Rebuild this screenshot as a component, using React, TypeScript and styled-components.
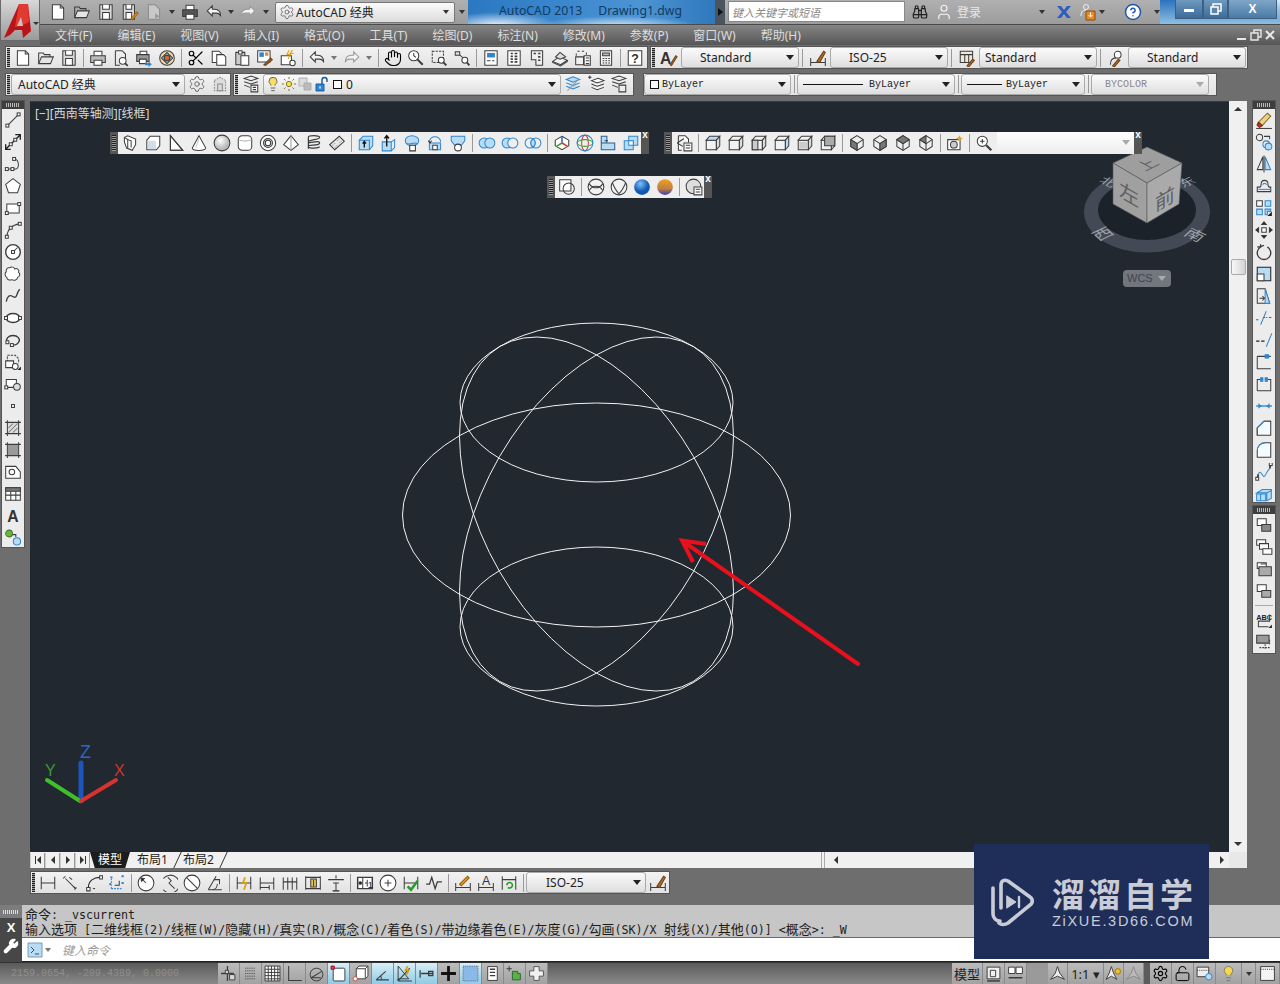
import React from 'react';
import styled, { createGlobalStyle } from 'styled-components';
import { Binoculars, CircleHelp, Hand, Lightbulb, LockOpen, Scissors, Settings, Sun, User, Wrench } from 'lucide-react';

const GlobalStyle = createGlobalStyle`
  html, body { margin: 0; padding: 0; background: #6e6e6e; }
  * { box-sizing: border-box; }
`;

const CJK = `"Noto Sans", "Noto Sans CJK SC", sans-serif`;
const MONO = `"Liberation Mono", "Noto Sans CJK SC", monospace`;

const BLUE = '#2f86cf';
const SKY = '#b7dcf4';

const Sq: React.FC<{ x: number; y: number }> = ({ x, y }) => (
  <rect x={x - 1.3} y={y - 1.3} width="2.6" height="2.6" fill="#fff" strokeWidth="0.9" />
);

const Cube: React.FC<{ face?: string }> = ({ face }) => (
  <>
    <path d="M2 5.5h9v8.5H2z" fill={face === 'front' ? SKY : '#f2f2f2'} />
    <path d="M2 5.5L5 2h9l-3 3.5z" fill={face === 'top' ? SKY : '#f2f2f2'} />
    <path d="M11 5.5L14 2v8.5L11 14z" fill={face === 'right' ? SKY : '#dcdcdc'} />
  </>
);

const Iso: React.FC<{ side: string }> = ({ side }) => (
  <>
    <path d="M8 1.5l5.5 3.5v6L8 14.5 2.5 11V5z" fill="#eee" />
    <path d="M2.5 5L8 8.5 13.5 5M8 8.5v6" />
    <path d={side === 'l' ? 'M2.5 5L8 8.5v6L2.5 11z' : side === 'r' ? 'M13.5 5L8 8.5v6l5.5-3.5z' : side === 't' ? 'M8 1.5l5.5 3.5L8 8.5 2.5 5z' : 'M8 1.5L2.5 5 8 8.5l0-7z'} fill="#777" />
  </>
);

const Dim: React.FC<{ children?: React.ReactNode }> = ({ children }) => (
  <>
    <path d="M2 2.5v11M14 2.5v11M2 8h12" />
    {children}
  </>
);

const Ord: React.FC<{ a: string; b: string }> = ({ a, b }) => (
  <>
    <path d="M2 2.5h8v6H2z" fill={a} />
    <path d="M6 7.5h8v6H6z" fill={b} />
  </>
);

const ICONS: Record<string, React.ReactNode> = {
  new: <><path d="M3 1.5h7l3 3v10H3z" fill="#fff" /><path d="M10 1.5v3h3" /></>,
  open: <><path d="M1.5 13V3.5h4l1 1.5h5v2" /><path d="M1.5 13l2.5-6h10.5l-2.5 6z" fill="#e4e4e4" /></>,
  save: <><path d="M2.5 1.5h11v13h-11z" fill="#d8d8d8" /><path d="M5 1.5v4h6v-4M5 8.5h6v6H5z" fill="#fff" /></>,
  saveas: <><path d="M2 1.5h10v13H2z" fill="#d8d8d8" /><path d="M4.5 1.5v4h5v-4M4.5 8.5h5v6h-5z" fill="#fff" /><path d="M9 14l5-6 1.2 1-5 6z" fill="#e8a020" stroke="#a06000" /></>,
  plotdoc: <><path d="M3 1.5h6l4 4v9H3z" fill="#c8c8c8" stroke="#8a8a8a" /><path d="M9 9l4 3-4 2z" fill="#9a9a9a" stroke="none" /></>,
  print: <><path d="M4.5 6V2h7v4" fill="#fff" /><path d="M1.5 6h13v6h-13z" fill="#bbb" /><path d="M4.5 10h7v4.5h-7z" fill="#fff" /></>,
  printw: <><path d="M4.5 6V2h7v4" fill="#fff" /><path d="M1.5 6h13v6h-13z" fill="#555" /><path d="M4.5 10h7v4.5h-7z" fill="#fff" /></>,
  undo: <><path d="M6.5 2.5L2 7l4.5 4.5V9H10c2 0 3.5 1 4 3 0-4-2-6.5-5.5-6.5h-2z" fill="#f4f4f4" /></>,
  redo: <><path d="M9.5 2.5L14 7l-4.5 4.5V9H6c-2 0-3.5 1-4 3 0-4 2-6.5 5.5-6.5h2z" fill="#f4f4f4" stroke="#9a9a9a" /></>,
  preview: <><path d="M3 1.5h6l3 3v5M7 14.5H3v-13" /><circle cx="9.5" cy="10.5" r="3" fill="#fff" /><path d="M11.5 12.5l2.5 2.5" strokeWidth="1.6" /></>,
  publish: <><path d="M4.5 5V2h6v3" fill="#fff" /><path d="M1.5 5h11v6h-11z" fill="#999" /><path d="M4 9h6v4H4z" fill="#fff" /><path d="M9 12.5h3V11l3 2.5-3 2.5v-1.5H9z" fill={BLUE} stroke="none" /></>,
  viz: <><circle cx="8" cy="8" r="6.5" fill="#f0d8a0" /><path d="M3 8l5-5 5 5-5 5z" fill="#7cb6e0" /><circle cx="8" cy="8" r="2.5" fill="#e06030" /></>,
  cut: <Scissors x="0" y="0" width="16" height="16" strokeWidth="1.6" />,
  copy: <><path d="M2 2h6l2 2v8H2z" fill="#fff" /><path d="M6 5h6l2 2v7.5H6z" fill="#fff" /></>,
  paste: <><path d="M2.5 3h8v11h-8z" fill="#ccc" /><path d="M5 1.5h3v3H5z" fill="#fff" /><path d="M7 6h7v8.5H7z" fill="#fff" /></>,
  match: <><path d="M1.5 1.5h11v10h-11z" fill="#fff" /><path d="M3 3h4v4H3z" fill={BLUE} stroke="none" /><path d="M8 3h3v3H8z" fill="#d84" stroke="none" /><path d="M7 14l6-6 1.5 1.5-6 5z" fill="#a06030" stroke="#704010" /></>,
  block: <><path d="M2 6h9v8H2z" fill="#fff" /><circle cx="12" cy="12.5" r="2.4" fill="#fff" /><path d="M9 1l-2 4h3l-2 4M12 1l-2 3h3" stroke="#e0a000" /></>,
  pan: <Hand x="0" y="0" width="16" height="16" strokeWidth="1.5" />,
  zrt: <><circle cx="6" cy="6" r="4.5" fill="#fff" /><path d="M6 3.5V6l2 1.5" /><path d="M9 9l5 5" strokeWidth="1.8" /></>,
  zwin: <><path d="M2 2h10v10H2z" strokeDasharray="2 1" /><circle cx="10" cy="10" r="2.6" fill="#fff" /><path d="M12 12l2.5 2.5" strokeWidth="1.7" /></>,
  zprev: <><path d="M2 2.5h4v3H2z" fill="#ddd" /><path d="M6 5.5l2.5 2" /><circle cx="10.5" cy="10" r="2.6" fill="#fff" /><path d="M12.5 12l2 2.5" strokeWidth="1.7" /></>,
  props: <><path d="M2.5 1.5h11v13h-11z" fill="#fff" /><path d="M4.5 3.5h7v4h-7z" fill={BLUE} stroke="none" /><path d="M4.5 10.5h3M9 10.5h2" /></>,
  dc: <><path d="M2.5 1.5h11v13h-11z" fill="#fff" /><path d="M5 4h2M8.5 4h2.5M5 6.5h2M8.5 6.5h2.5M5 9h2M8.5 9h2.5M5 11.5h2M8.5 11.5h2.5" strokeWidth="1.5" /></>,
  tp: <><path d="M3 1.5h10v13H7v-5H3z" fill="#eee" /><path d="M5 4h2M9 4h2M9 7h2M9 10h2" strokeWidth="1.5" /></>,
  sheet: <><path d="M1.5 11l6-4 7 3-6 4z" fill="#f0f0f0" /><path d="M4 7l4-4 5 4-5 2z" fill="#ddd" /><path d="M1.5 11v1l7 3 6-4v-1" /></>,
  markup: <><path d="M3 2h2M7 2h2M2 4v2M11 3v2" /><path d="M1.5 7h7v7h-7z" fill="#f0f0f0" /><path d="M9 6h5.5v8.5H9z" fill="#fff" /><path d="M10.5 8h3M10.5 10.5h3M10.5 13h3" /></>,
  calc: <><path d="M3 1.5h10v13H3z" fill="#f4f4f4" /><path d="M5 3.5h6v2.5H5z" fill="#bbb" /><path d="M5 8.5h1.5M7.5 8.5H9M10 8.5h1.5M5 10.5h1.5M7.5 10.5H9M10 10.5h1.5M5 12.5h1.5M7.5 12.5H9M10 12.5h1.5" /></>,
  help: <><path d="M2 1.5h12v13H2z" fill="#fff" /><text x="8" y="12" textAnchor="middle" fontFamily="Liberation Sans" fontWeight="700" fontSize="11" fill="#333" stroke="none">?</text></>,
  tstyle: <><text x="0" y="13" fontFamily="Liberation Sans" fontWeight="700" fontSize="14" fill="#333" stroke="none">A</text><path d="M9 14l5-8 1.2.8-5 8z" fill="#a86a30" stroke="#704010" /></>,
  dstyle: <><path d="M1.5 8v7M14.5 8v7M1.5 12h13" /><path d="M7 11l6-9 1.5 1-5 9z" fill="#a86a30" stroke="#704010" /></>,
  tbstyle: <><path d="M2 2h11v10H2zM2 5h11M6 5v7M9.5 5v7" fill="#f0e8d8" /><path d="M8 15l5-6 1.5 1-5 6z" fill="#a86a30" stroke="#704010" /></>,
  mlstyle: <><path d="M3 14c0-5 2-6 5-6" /><circle cx="9.5" cy="5" r="3" fill="#fff" /><path d="M5 15l5-6 1.5 1-5 6z" fill="#a86a30" stroke="#704010" /></>,
  wsgear: <Settings x="0" y="0" width="16" height="16" strokeWidth="1.3" stroke="#666" />,
  wssave: <><path d="M3 5l5-3 5 3v9H3z" stroke="#888" strokeDasharray="1.5 1" fill="#ddd" /><path d="M6 8h4v6H6z" stroke="#888" /></>,
  laymgr: <><path d="M2 3l6-2 6 2-6 2zM2 6l6 2 6-2M2 9l5 2" /><path d="M8 9h6v6H8z" fill="#fff" /><path d="M9.5 11h3M9.5 13h3" /></>,
  laycur: <><path d="M2 4l6-2.5L14 4 8 6.5zM2 7l6 2.5L14 7M2 10l6 2.5L14 10" stroke={BLUE} fill={SKY} /><path d="M3 14l10-10" stroke="#c86" /></>,
  laymatch: <><path d="M1 2l3 0M2.5 .5v3" /><path d="M4 5l6-2 5 2-6 2zM4 8l5 2 6-2M4 11l5 2 6-2" fill="#fff" /></>,
  layprev: <><path d="M2 3l6-2 6 2-6 2zM2 6l6 2 6-2M2 9l5 2" /><path d="M8 9h6v6H8z" fill="#eee" /></>,
  bulb: <Lightbulb x="0" y="0" width="16" height="16" strokeWidth="1.5" fill="#f8de60" stroke="#665" />,
  sun: <Sun x="0" y="0" width="16" height="16" strokeWidth="1.5" fill="#f6e060" stroke="#8a7a20" />,
  freeze: <><path d="M2 2h8v8H2z" fill="#ddd" stroke="#aaa" /><path d="M7 7h7v7H7z" fill="#bbb" stroke="#aaa" /></>,
  unlock: <><path d="M3 8h8v7H3z" fill={BLUE} stroke="#105a9a" /><path d="M9 8V4a2.5 2.5 0 0 1 5 0v2" stroke="#105a9a" strokeWidth="1.4" /><path d="M7 10.5v2" stroke="#fff" strokeWidth="1.4" /></>,
  line: <><path d="M3 13L13 3" /><Sq x={3} y={13} /><Sq x={13} y={3} /></>,
  xline: <><path d="M1.5 14.5l13-13M10 1.5h4.5V6M1.5 10v4.5H6" stroke="#222" strokeWidth="1.2" /><Sq x={6} y={10} /><Sq x={10} y={6} /></>,
  pline: <><path d="M2.5 12.5h5l3 0c3 0 3.5-8-1-9" /><Sq x={2.5} y={12.5} /><Sq x={7.5} y={12.5} /><Sq x={9} y={3.5} /></>,
  polygon: <path d="M8 1.5l6.5 5-2.5 7.5H4L1.5 6.5z" fill="#fff" />,
  rect: <><path d="M2.5 4.5h11v8h-11z" fill="#fff" /><Sq x={2.5} y={12.5} /><Sq x={13.5} y={4.5} /></>,
  arc: <><path d="M2.5 14C3 8 7 3.5 14 2.5" /><Sq x={2.5} y={14} /><Sq x={6} y={6} /><Sq x={14} y={2.5} /></>,
  circle: <><circle cx="8" cy="8" r="6.5" fill="#fff" strokeWidth="1.2" /><path d="M8 8l4-4" /><Sq x={8} y={8} /></>,
  cloud: <path d="M5 2.5c2-1.5 4-.5 4.5 1 2-1 4.5 1 3.5 3 1.5 1 1.5 4-1 4.5 0 2-3 3.5-5 2-2 1-4.5 0-4.5-2-2-1-2-4-.5-5C1.5 4 3 2 5 2.5z" fill="#fff" />,
  spline: <path d="M2 13c1-5 3-6 5-5s3 2 4 0 1-4 3-6" strokeWidth="1.2" />,
  ellipse: <><ellipse cx="8" cy="8" rx="6.2" ry="4" fill="#fff" strokeWidth="1.2" /><Sq x={1.8} y={8} /><Sq x={14.2} y={8} /></>,
  ellarc: <><path d="M3 10C1 7 4 4 8 4s7 3 5 6-6 2.5-6 2.5" strokeWidth="1.2" /><Sq x={3} y={10} /><Sq x={7} y={12.5} /></>,
  insert: <><path d="M3 8V2h7l3 3v4" strokeDasharray="2 1" /><path d="M1.5 7h7v6h-7z" fill="#fff" /><circle cx="10" cy="12" r="2.6" fill="#fff" /><path d="M12 15l3-3v3z" fill="#222" stroke="none" /></>,
  bcreate: <><path d="M2 4h9v7H2z" fill="#fff" /><circle cx="11.5" cy="10.5" r="3" fill="#ddd" /><Sq x={2} y={11} /></>,
  point: <Sq x={8} y={8} />,
  hatch: <><path d="M3 3h10v10H3zM1 3h14M1 13h14M3 1v14M13 1v14" fill="#ddd" /><path d="M4 8l4-4M4 12l8-8M8 12l4-4" stroke="#777" /></>,
  gradient: <><path d="M3 3h10v10H3zM1 3h14M1 13h14M3 1v14M13 1v14" /><path d="M3.5 3.5h9v9h-9z" fill="#777" stroke="none" opacity=".7" /></>,
  region: <><path d="M1.5 3h9l4 5v5.5h-13z" fill="#fff" /><circle cx="7" cy="8" r="2.5" fill="#fff" /></>,
  table: <><path d="M1.5 2.5h13v11h-13z" fill="#fff" /><path d="M1.5 2.5h13v3h-13z" fill="#777" /><path d="M1.5 9h13M6 5.5v8M10.5 5.5v8" /></>,
  mtext: <text x="8" y="13" textAnchor="middle" fontFamily="Liberation Sans" fontWeight="700" fontSize="14" fill="#333" stroke="none">A</text>,
  addsel: <><circle cx="4.5" cy="4" r="3" fill="#6eb53f" stroke="#3d7a20" /><path d="M7.5 5h3v2" /><circle cx="11.5" cy="11" r="3.2" fill={SKY} stroke={BLUE} /></>,
  eraser: <><path d="M3 10l8-8 3 2.5-7.5 8.5z" fill="#e9d18a" stroke="#8a6a20" /><path d="M3 10l3.5 3L4 14.5 1.8 12.5z" fill="#c83a20" stroke="#802010" /><path d="M1 15.5h14" /></>,
  cpobj: <><circle cx="4" cy="4" r="2.8" /><path d="M8 3h5v2.5" /><circle cx="10" cy="10" r="3" stroke={BLUE} /><circle cx="12" cy="12" r="3" fill={SKY} stroke={BLUE} /></>,
  mirror: <><path d="M7 1.5L2 13h5z" /><path d="M9 1.5l5 11.5H9z" fill={SKY} stroke={BLUE} /><path d="M8 .5v15" /></>,
  offset: <><path d="M2 13V9h2c1 0 1.5-1 1.5-3a3 3 0 0 1 6 0c0 2 .5 3 1.5 3h1v4z" /><path d="M3 11h11" stroke={BLUE} /><path d="M7 7a1.5 1.5 0 0 1 3 0" stroke={BLUE} /></>,
  array: <><path d="M1.5 1.5h5v5h-5z" fill="#fff" /><path d="M9 1.5h5v5H9zM1.5 9h5v5h-5z" fill={SKY} stroke={BLUE} /><path d="M9 9h5v2H11v3H9z" fill={SKY} stroke={BLUE} /><path d="M15 11v4h-4z" fill="#222" stroke="none" /></>,
  move: <><path d="M6 6h4v4H6z" fill="#fff" /><path d="M8 .8L6 3.2h4zM8 15.2l-2-2.4h4zM.8 8l2.4-2v4zM15.2 8l-2.4-2v4z" fill="#222" /></>,
  rotate: <path d="M5 3.5A6 6 0 1 0 11 3.5M5 3.5h-3M5 3.5V1M5 3.5L8 2" strokeWidth="1.2" />,
  scale: <><path d="M2 2h12v12H2z" fill={SKY} stroke="#222" /><path d="M2 8h6v6H2z" fill="#fff" /></>,
  stretch: <><path d="M2 1.5h7l4 13H2z" /><path d="M9 1.5l4 13H9z" fill={SKY} stroke={BLUE} /><path d="M4 10h4M6.5 8l2 2-2 2" fill="none" /></>,
  trim: <><path d="M1 9.5h3M7 7.5l4 0M12.5 7.5h2" stroke="#555" strokeDasharray="2 1" /><path d="M5 14L10 2" stroke={BLUE} /></>,
  extend: <><path d="M1 9h3M5.5 9h3" stroke="#222" strokeDasharray="3 1" /><path d="M10 14l5-12" stroke={BLUE} /></>,
  breakpt: <><path d="M2 3h12M2 3v11h12" /><path d="M9 1.5h3v3H9z" fill={BLUE} stroke={BLUE} /></>,
  brk: <><path d="M2 14V4h3M11 4h3v10H2" /><path d="M5 2.5h2v3H5zM9 2.5h2v3H9z" fill={BLUE} stroke={BLUE} /></>,
  join: <><path d="M1 8h14" stroke={BLUE} strokeWidth="1.2" /><path d="M3 5.5l3 2.5-3 2.5zM13 5.5L10 8l3 2.5z" fill={BLUE} stroke="none" /></>,
  chamfer: <><path d="M2 14.5V8l6-6h6" /><path d="M2 14.5V8l6-6h6v12.5z" fill="#f4fbff" /><path d="M2 8l6-6" stroke={BLUE} /></>,
  fillet: <><path d="M2 14.5V8.5a7 7 0 0 1 7-7h5v13z" fill="#f4fbff" /><path d="M2 8.5a7 7 0 0 1 7-7" stroke={BLUE} /></>,
  blend: <><path d="M2 14l1-4M13 5l1-4" strokeWidth="1.6" /><path d="M3 10c2-6 4 5 6 1s3-5 4-6" stroke={BLUE} /><Sq x={2} y={14} /><Sq x={14} y={1} /></>,
  explode: <><path d="M1.5 7l5-3h8l-1 3z" stroke={BLUE} fill={SKY} /><path d="M1.5 8h8v6h-8zM10.5 7l4-2v7l-4 2z" stroke={BLUE} fill={SKY} /><path d="M5 8v6" stroke={BLUE} /></>,
  ord1: <Ord a="#fff" b="#888" />,
  ord2: <><path d="M1.5 1.5h8v5h-8z" fill="#fff" /><path d="M4 5h8v5H4z" fill="#fff" /><path d="M7 9.5h8v5H7z" fill="#fff" /></>,
  ord3: <><path d="M2 2.5h8v5H2z" fill="#fff" /><path d="M3.5 6h11v8h-11z" fill="#aaa" /><path d="M5 3.5h5" /></>,
  ord4: <Ord a="#fff" b="#aaa" />,
  abc: <><text x="1" y="8" fontFamily="Liberation Sans" fontSize="6.5" fontWeight="700" fill="#222" stroke="none">ABC</text><path d="M13 3v6H3v5h9" /><path d="M12 15l3-3v3z" fill="#222" stroke="none" /></>,
  wipe: <><path d="M1.5 2h11v7h-11z" fill="#999" /><path d="M4 13h10M9 10v5M13 6v4" strokeDasharray="1.5 1" /></>,
  psolid: <><path d="M3 3l3-1.5 7 3v5l-3 5-5-2-2-5.5z" fill="#fff" /><path d="M3 3l3 2v8" /><path d="M6 5l3 1v6" /></>,
  box: <><path d="M2.5 5.5L5.5 2H14v8.5L11 14H2.5z" fill="#fff" /><path d="M3.5 6h7v7.5h-7z" fill="#d0dce6" stroke="none" /></>,
  wedge: <><path d="M3 1.5v13h11z" fill="#fff" /><path d="M3 1.5L14 14.5H3z" /></>,
  cone: <><path d="M8 1.5L2 12.5a6 2.2 0 0 0 12 0z" fill="#fff" /><path d="M5 12c1-2 2-5 3-8" stroke="#ccc" /></>,
  sphere: <><defs><radialGradient id="sg" cx=".4" cy=".35"><stop offset="0" stopColor="#fff" /><stop offset="1" stopColor="#bbb" /></radialGradient></defs><circle cx="8" cy="8" r="7" fill="url(#sg)" /></>,
  cyl: <><rect x="2" y="1.5" width="12" height="13" rx="3.5" fill="#fff" /><path d="M2 5c3 1.5 9 1.5 12 0" stroke="#aaa" /></>,
  torus: <><circle cx="8" cy="8" r="6.8" fill="#fff" /><circle cx="8" cy="8" r="4" fill="#ccc" /><circle cx="8" cy="8" r="2.4" fill="#fff" /></>,
  pyr: <><path d="M8 1.5L1.5 9.5 8 14.5l6.5-5z" fill="#fff" /><path d="M8 1.5v13" stroke="#999" /></>,
  helix: <path d="M3 3c0-2 10-2 10 0s-10 2-10 4 10-2 10 1-10 1-10 3 10 2 10 0M3 3v10" strokeWidth="1.1" />,
  planar: <><path d="M1.5 9.5L10 2l4.5 4.5L6 14z" fill="#e8e8e8" /><path d="M4 10l3-2.5M6 12l3-2.5M8 6l3-2.5M10 8l2-2" stroke="#999" strokeDasharray="1 1" /></>,
  extrude: <><path d="M2 5.5L5.5 2H14v8.5L11 14H2z" fill={SKY} stroke={BLUE} /><path d="M2 5.5h9V14" stroke={BLUE} /><path d="M6.5 12V7M5 8.5l1.5-2 1.5 2" stroke="#111" strokeWidth="1.2" /></>,
  presspull: <><path d="M2 7h8v8H2z" fill={SKY} stroke={BLUE} /><path d="M10 15l3-3V5l-3 2" stroke={BLUE} /><path d="M6 11V2M4 4l2-2.5L8 4" stroke="#111" strokeWidth="1.2" /></>,
  sweep: <><ellipse cx="8" cy="6" rx="6" ry="4.5" fill={SKY} stroke={BLUE} /><path d="M3 8c3 3 7-2 10 1" stroke={BLUE} /><path d="M6 10h5v5H6z" fill="#fff" stroke="#333" /></>,
  revolve: <><path d="M3 7c0-6 10-6 10 0" stroke={BLUE} /><path d="M3 8h10v6H3z" fill={SKY} stroke={BLUE} /><path d="M2 6L3.5 8 5 6" stroke="#222" /><path d="M6 10h4v4H6z" fill="#fff" /></>,
  loft: <><path d="M2 2h12v4l-3 4H5L2 6z" fill={SKY} stroke={BLUE} /><circle cx="8" cy="12" r="3" fill="#fff" /></>,
  union: <><circle cx="5.5" cy="8" r="4.5" fill={SKY} stroke={BLUE} /><circle cx="10.5" cy="8" r="4.5" fill={SKY} stroke={BLUE} /></>,
  subtract: <><circle cx="5.5" cy="8" r="4.5" fill={SKY} stroke={BLUE} /><circle cx="10.5" cy="8" r="4.5" fill="#eee" stroke={BLUE} /></>,
  inter: <><circle cx="5.5" cy="8" r="4.5" fill="#eee" stroke={BLUE} /><circle cx="10.5" cy="8" r="4.5" fill="none" stroke={BLUE} /><path d="M8 4.3a4.5 4.5 0 0 1 0 7.4 4.5 4.5 0 0 1 0-7.4z" fill={SKY} stroke={BLUE} /></>,
  g3d: <><path d="M8 2l6 3.5v5L8 14l-6-3.5v-5z" fill="#fff" /><path d="M8 8V2" stroke="#2a6fc0" strokeWidth="1.4" /><path d="M8 8l-5 3" stroke="#3a3" strokeWidth="1.4" /><path d="M8 8l5 3" stroke="#d33" strokeWidth="1.4" /></>,
  r3d: <><ellipse cx="8" cy="8" rx="3" ry="7" stroke="#d33" /><ellipse cx="8" cy="8" rx="7" ry="3" stroke="#3a3" /><circle cx="8" cy="8" r="7" stroke={BLUE} /></>,
  a3d: <><path d="M2 2h5v6H2zM2 8h12v6H2z" fill={SKY} stroke="#2a5f90" /><path d="M5 6h3" /></>,
  arr3d: <><path d="M6 2h8v8H6z" fill={SKY} stroke={BLUE} /><path d="M2 6h8v8H2z" fill={SKY} stroke={BLUE} /><path d="M6 6h4v4H6z" fill="#fff" stroke={BLUE} /></>,
  nview: <><path d="M3 1.5h6l3 3v3M6 14.5H3v-13" fill="#fff" /><path d="M2 8L8 4M2 8l5 3" /><path d="M8 8h7v7H8z" fill="#fff" /><path d="M9.5 10h4M9.5 12.5h4" /></>,
  vtop: <Cube face="top" />,
  vbot: <Cube />,
  vleft: <><Cube /><path d="M2 5.5h5v8.5H2z" fill="#ccc" /></>,
  vright: <Cube face="right" />,
  vfront: <><Cube /><path d="M3 7h7v6H3z" fill="#ccc" stroke="none" /></>,
  vback: <><Cube /><path d="M5 2h9v8.5H5z" fill="#aaa" /></>,
  sw: <Iso side="l" />,
  se: <Iso side="r" />,
  ne: <Iso side="t" />,
  nw: <Iso side="n" />,
  cam: <><path d="M1.5 5h11v9h-11z" fill="#fff" /><circle cx="7" cy="9.5" r="3" fill="#ccc" /><path d="M12 1l1 2 2 1-2 1-1 2-1-2-2-1 2-1z" fill="#e8a020" stroke="none" /></>,
  zcam: <><circle cx="6.5" cy="6.5" r="4.5" fill="#fff" /><path d="M10 10l4.5 4.5" strokeWidth="2" /><path d="M4.5 6.5h4M6.5 4.5v4" /></>,
  vs2d: <><path d="M1.5 1.5h10v10h-10z" fill="#fff" /><circle cx="9.5" cy="9.5" r="5" fill="none" /></>,
  vswire: <><circle cx="8" cy="8" r="7" fill="#f2f2f2" /><path d="M2 5c3 5 9 5 12 0M2 11c3-5 9-5 12 0" /></>,
  vshid: <><circle cx="8" cy="8" r="7" fill="#f2f2f2" /><path d="M2 4c2 5 4 8 6 10M14 4c-2 5-4 8-6 10" /></>,
  vsblue: <><defs><radialGradient id="bl" cx=".4" cy=".3"><stop offset="0" stopColor="#7fc0ff" /><stop offset="1" stopColor="#0f57b0" /></radialGradient></defs><circle cx="8" cy="8" r="7" fill="url(#bl)" stroke="none" /></>,
  vsor: <><defs><linearGradient id="or" x1="0" y1="0" x2="0" y2="1"><stop offset="0" stopColor="#f0a020" /><stop offset=".6" stopColor="#c08040" /><stop offset="1" stopColor="#3d3fb0" /></linearGradient></defs><circle cx="8" cy="8" r="7" fill="url(#or)" stroke="none" /></>,
  vsmgr: <><circle cx="7.5" cy="7.5" r="6.5" fill="#ddd" /><path d="M8 8h7v7H8z" fill="#fff" /><path d="M9.5 10h4M9.5 12.5h4" /></>,
  dimlin: <Dim />,
  dimal: <><path d="M3 2l-2 2M13 12l-2 2M3 4l9 9" /><path d="M6.5 3L9 5M10 11l2.5 2" /></>,
  dimarc: <><path d="M3 12C3 6 8 3 13 3" stroke="#222" /><path d="M1.5 12h3v3h-3zM13 1.5h2.5v3H13z" fill="#fff" /><path d="M7 13h2" /></>,
  dimord: <><path d="M3 13h10M3 13V3" stroke={BLUE} strokeDasharray="1.5 1" /><path d="M6 10h4V6" /><path d="M2 8v2M2 3h2M12 2h2M12 8h2" stroke={BLUE} strokeWidth="1.6" /></>,
  dimrad: <><circle cx="8" cy="8" r="7" fill="#fff" /><path d="M8 8L3.5 3.5" /><path d="M3.5 3.5l3 .6-2.4 2.4z" fill="#222" /></>,
  dimjog: <><path d="M3 4a8 8 0 1 1 0 10" fill="none" /><path d="M13 13L8 8l2-2-3-3" /></>,
  dimdia: <><circle cx="8" cy="8" r="7" fill="#fff" /><path d="M3 3l10 10" /></>,
  dimang: <><path d="M2 14h12M2 14L9 2" /><path d="M6 14a5 5 0 0 0 4-5" /><path d="M7 5h5v4" /></>,
  qdim: <Dim><path d="M9 3l-2 5h3l-2 6" stroke="#e0a000" strokeWidth="1.5" /></Dim>,
  dimbase: <><path d="M2 3v11M14 3v11M2 8h12M2 12h8M10 10v4" /></>,
  dimcont: <><path d="M2 3v11M6 3v11M10 3v11M14 3v11M2 7h12" /></>,
  dimsp: <><path d="M1.5 2v12M14.5 2v12M1.5 3h13M1.5 13h13" /><path d="M6 4.5h5v7H6z" fill="#e8c850" /><path d="M8.5 5v6" /></>,
  dimbrk: <><path d="M1 5h14M8 1v3M8 8v7M5.5 8h5" /><path d="M5 15h6" strokeWidth="1.3" /></>,
  tol: <><path d="M1.5 3h13v10h-13z" fill="#fff" strokeWidth="1.3" /><path d="M6 3v10" /><circle cx="3.8" cy="8" r="1.2" fill="#222" /><path d="M8 8h2M10 5v6" /><text x="10.5" y="12" fontSize="8" fontFamily="Liberation Sans" fill="#222" stroke="none">1</text></>,
  cmark: <><circle cx="8" cy="8" r="7" fill="#fff" /><path d="M5 8h6M8 5v6" /></>,
  insp: <Dim><path d="M5 11l3 3 6-8" stroke="#2a9a2a" strokeWidth="2.2" /></Dim>,
  jogl: <path d="M1 9h3l2-6 3 10 2-6h4" strokeWidth="1.2" />,
  dimed: <><path d="M1.5 8v7M14.5 8v7M1.5 12h13" /><path d="M5 9l7-7 1.5 1.5-7 7z" fill="#e8a020" stroke="#8a5a00" /></>,
  dimted: <><path d="M1.5 8v7M14.5 8v7M1.5 12h13" /><text x="8" y="10" textAnchor="middle" fontFamily="Liberation Sans" fontSize="11" fill="#333" stroke="none">A</text></>,
  dimup: <><path d="M2 2v12M14 2v12M2 5h12" /><path d="M6 10a2.5 2.5 0 1 1 1 2" stroke="#2a9a2a" strokeWidth="1.4" /></>,
  sInfer: <><path d="M7 1v14M1 8h12" strokeWidth="1.2" /><path d="M9 9h5v5H9zM5 5h3v3H5z" fill="#d8d8d8" /></>,
  sSnap: <path d="M3 3h10M3 5.5h10M3 8h10M3 10.5h10M3 13h10" strokeDasharray="1 1" />,
  sGrid: <path d="M1 1h14v14H1zM1 4h14M1 7h14M1 10h14M1 13h14M4 1v14M7 1v14M10 1v14M13 1v14" fill="#fff" strokeWidth=".9" />,
  sOrtho: <path d="M2.5 1v13.5H15M2.5 14.5" strokeWidth="1" />,
  sPolar: <><circle cx="8" cy="9" r="6" /><path d="M3 12L13 6M3 12h9" strokeWidth="1" /></>,
  sOsnap: <><rect x="3" y="3" width="11" height="12" rx="1" fill="#fff" /><path d="M1 1h3v3H1z" fill="#d05040" stroke="#a02" /></>,
  s3d: <><path d="M4 3.5L6.5 1H15v9.5L12.5 13H4z" fill="#fff" /><path d="M4 3.5h8.5V13M12.5 3.5L15 1" /><circle cx="3" cy="13" r="2" fill="#fff" stroke="#d05040" /></>,
  sOtrack: <path d="M2 14h12M2 14L11 6M7 14a5 5 0 0 0-1-4" strokeWidth="1" />,
  sDucs: <><path d="M2 15V1L12 13H2z" /><path d="M2 15h13M2 15L13 3" strokeWidth="1" /><path d="M11 1l-2 4h3l-2 4" stroke="#e0a000" strokeWidth="1.5" /></>,
  sDyn: <><path d="M2 5v7M3 8h11M10 6h4v4h-4z" strokeWidth="1.2" /></>,
  sLwt: <path d="M8 1v14M1 8h14" strokeWidth="2.6" stroke="#111" />,
  sTp: <rect x="1" y="1" width="14" height="14" fill="#8ab8e8" stroke="#666" strokeDasharray="1 1" />,
  sQp: <><path d="M3.5 1.5h9v13h-9z" fill="#fff" /><path d="M5.5 4h5M5.5 7h5M5.5 10h5" strokeWidth="1.2" /></>,
  sSc: <><path d="M3 1v5M.5 3.5h5" /><path d="M6 6h5v2h2.5v6H6z" fill="#5ab04a" stroke="#2a6a2a" /></>,
  sPlus: <path d="M5.5 1.5h5v4h4v5h-4v4h-5v-4h-4v-5h4z" fill="#f0f0f0" stroke="#555" />,
  sLay: <><path d="M2 2h12v11H2z" fill="#f0f0f0" /><path d="M5 5l5 0v6H5z" fill="none" /><path d="M2 15h12" strokeWidth="1.4" /></>,
  sVp: <><path d="M1.5 2h6v6h-6zM8.5 2h6v6h-6z" fill="#fff" /><path d="M1.5 12h13" strokeWidth="1.4" /></>,
  sAnno: <path d="M8 1.5l2 6 4.5 6-6.5-3-6.5 3L6 7.5z" fill="#eee" />,
  sAnno2: <><path d="M6 1.5l2 6 3 6-5-3-5 3L4 7.5z" fill="#eee" /><circle cx="12" cy="6" r="2.6" fill="#f4c030" stroke="#a07000" /></>,
  sAnno3: <path d="M8 1.5l2 6 4.5 6-6.5-3-6.5 3L6 7.5z" fill="#bbb" stroke="#888" />,
  sWs: <Settings x="0" y="0" width="16" height="16" strokeWidth="1.6" />,
  sLock: <LockOpen x="0" y="0" width="16" height="16" strokeWidth="1.4" />,
  sHw: <><path d="M1 2h11v9H1z" fill="#eee" /><path d="M1 5h11" strokeDasharray="1 1" /><circle cx="12" cy="11" r="3" fill={SKY} stroke={BLUE} /></>,
  sBulb: <Lightbulb x="0" y="0" width="16" height="16" strokeWidth="1.3" fill="#f8d848" stroke="#776" />,
  sClean: <><path d="M1.5 1.5h13v13h-13z" fill="#f4f4f4" /><path d="M1.5 4h13" strokeDasharray="1 1" /></>,
  prompt: <><path d="M1 1h14v14H1z" fill={SKY} stroke="#6a93b6" /><path d="M4 5l3 3-3 3M8 12h4" /></>,
};

const Ico: React.FC<{ n: string; size?: number }> = ({ n, size = 18 }) => (
  <svg width={size} height={size} viewBox="0 0 16 16" fill="none" stroke="#3c3c3c" strokeWidth="0.9">
    {ICONS[n]}
  </svg>
);

const Page = styled.div`
  position: relative;
  width: 1280px;
  height: 984px;
  overflow: hidden;
  background: #6e6e6e;
  font-family: ${CJK};
  display: flex;
  flex-direction: column;
`;

/* ---------- window header ---------- */
const Header = styled.header`
  display: flex;
  height: 45px;
`;

const AppButton = styled.div`
  position: relative;
  width: 40px;
  height: 41px;
  background: linear-gradient(#d8d8d8, #9a9a9a);
  border: 1px solid #6a6a6a;
  border-top: none;
`;

const HeaderBody = styled.div`
  flex: 1;
  display: flex;
  flex-direction: column;
`;

const TitleRow = styled.div`
  display: flex;
  height: 24px;
  background: linear-gradient(#b0b0b0, #9c9c9c);
`;

const QuickBar = styled.div`
  width: 428px;
  display: flex;
  align-items: center;
  padding-left: 6px;
`;

const QuickIcon = styled.span<{ $w?: number; $ml?: number }>`
  width: ${p => p.$w ?? 24}px;
  margin-left: ${p => p.$ml ?? 0}px;
  height: 22px;
  display: flex;
  align-items: center;
  justify-content: center;
  flex: none;
`;

const TinyArrow = styled.span<{ $light?: boolean }>`
  width: 0;
  height: 0;
  border: 3px solid transparent;
  border-top: 4px solid ${p => (p.$light ? '#777' : '#333')};
  border-bottom: none;
`;

const WorkspaceBox = styled.div`
  width: 180px;
  height: 21px;
  margin-left: 3px;
  flex: none;
  display: flex;
  align-items: center;
  gap: 1px;
  padding: 0 5px 0 3px;
  border: 1px solid #777;
  border-radius: 2px;
  background: linear-gradient(#fafafa, #dcdcdc);
  font-size: 12px;
  color: #222;
  white-space: nowrap;
  span:last-child { margin-left: auto; }
`;

const TitleGlass = styled.div`
  width: 247px;
  display: flex;
  align-items: center;
  padding: 0 0 3px 31px;
  font-size: 12.3px;
  color: #123a60;
  white-space: pre;
  background:
    radial-gradient(60px 14px at 30px 26px, #f0f8ff 0%, transparent 100%),
    radial-gradient(80px 10px at 150px 26px, #cfe6f6 0%, transparent 100%),
    linear-gradient(90deg, #2a78c0, #3a86cc 35%, #4c94d4 70%, #2f78bc);
`;

const GlassEnd = styled.div`
  width: 10px;
  display: flex;
  align-items: center;
  justify-content: center;
  background: #4a5560;
  &::before {
    content: '';
    border: 4px solid transparent;
    border-left: 5px solid #111;
    border-right: none;
  }
`;

const SearchBox = styled.div`
  width: 177px;
  height: 21px;
  margin: 1px 0 0 3px;
  padding: 0 3px;
  line-height: 21px;
  background: #fff;
  border: 1px solid #888;
  color: #888;
  font-size: 11px;
  font-style: italic;
`;

const InfoBar = styled.div`
  width: 255px;
  display: flex;
  align-items: center;
  padding-left: 3px;
  color: #e8e8e8;
  font-size: 12px;
`;

const LoginText = styled.span`
  width: 83px;
  padding-left: 1px;
`;

const WindowArea = styled.div`
  flex: 1;
  display: flex;
  padding-left: 15px;
  background:
    radial-gradient(40px 20px at 100% 0, #dff0fb 0%, transparent 100%),
    linear-gradient(#2a73bb, #8fbfe2);
`;

const WinButton = styled.div<{ $w: number; $close?: boolean }>`
  width: ${p => p.$w}px;
  height: 19px;
  display: flex;
  align-items: center;
  justify-content: center;
  color: #fff;
  font: bold 12px "Liberation Sans", sans-serif;
  border: 1px solid #3f5f80;
  border-top: none;
  background: ${p => (p.$close ? 'linear-gradient(#7fa6c8, #4a7ba6)' : 'linear-gradient(#6f99be, #3a6c9c)')};
`;

const MenuRow = styled.nav`
  height: 21px;
  display: flex;
  align-items: center;
  gap: 25px;
  padding: 0 0 1px 15px;
  background: linear-gradient(#858585, #565656);
  border-top: 1px solid #4a4a4a;
  color: #ddd;
  font-size: 12px;
`;

const MdiControls = styled.div`
  margin-left: auto;
  display: flex;
  align-items: center;
  gap: 3px;
  padding-right: 4px;
`;

/* ---------- toolbars ---------- */
const ToolRow = styled.div`
  display: flex;
  height: 27px;
  padding: 1px 0 0 5px;
`;

const Toolbar = styled.div<{ $w: number; $gap?: number }>`
  width: ${p => p.$w}px;
  margin-left: ${p => p.$gap ?? 0}px;
  height: 23px;
  display: flex;
  align-items: center;
  flex: none;
  background: linear-gradient(#f2f2f2, #e2e2e2);
  border: 1px solid #555;
`;

const Grip = styled.span`
  width: 3px;
  height: 19px;
  margin: 0 1px;
  flex: none;
  background: repeating-linear-gradient(#222 0 1px, #999 1px 2px);
`;

const Tool = styled.span<{ $w?: number }>`
  width: ${p => p.$w ?? 23}px;
  height: 21px;
  display: flex;
  align-items: center;
  justify-content: center;
  flex: none;
`;

const ToolSep = styled.span`
  width: 6px;
  height: 18px;
  flex: none;
  background: linear-gradient(#999, #999) center / 1px 100% no-repeat;
`;

const Combo = styled.div<{ $w: number; $mono?: boolean; $dim?: boolean; $tight?: boolean }>`
  width: ${p => p.$w}px;
  height: 21px;
  flex: none;
  display: flex;
  align-items: center;
  gap: ${p => (p.$tight ? 0 : 3)}px;
  padding: 0 4px 0 ${p => (p.$tight ? 1 : 5)}px;
  border: 1px solid #aaa;
  border-radius: 3px;
  background: linear-gradient(#fbfbfb, #dedede);
  color: ${p => (p.$dim ? '#888' : '#222')};
  font-family: ${p => (p.$mono ? MONO : CJK)};
  font-size: ${p => (p.$mono ? 10 : 12)}px;
  white-space: nowrap;
`;

const ComboText = styled.span<{ $pad?: number }>`
  flex: 1;
  padding-left: ${p => p.$pad ?? 0}px;
`;

const ComboArrow = styled.span<{ $light?: boolean }>`
  width: 0;
  height: 0;
  flex: none;
  border: 4px solid transparent;
  border-top: 5px solid ${p => (p.$light ? '#aaa' : '#222')};
  border-bottom: none;
`;

const Swatch = styled.span<{ $ml?: number }>`
  width: 9px;
  height: 9px;
  margin-left: ${p => p.$ml ?? 0}px;
  flex: none;
  background: #fff;
  border: 1px solid #111;
`;

const DashLine = styled.span<{ $w: number }>`
  width: ${p => p.$w}px;
  height: 1px;
  flex: none;
  background: #111;
`;

const renderTools = (list: string[]) =>
  list.map((n, i) => {
    if (n === '|') return <ToolSep key={i} />;
    if (n === 'dd') return <Tool key={i} $w={12}><TinyArrow $light /></Tool>;
    return <Tool key={i}><Ico n={n} /></Tool>;
  });

/* ---------- main area ---------- */
const Main = styled.main`
  display: flex;
  height: 770px;
  padding-top: 2px;
`;

const DockLeft = styled.aside`
  width: 30px;
  flex: none;
  margin-top: -1px;
  padding-left: 1px;
`;

const DockRight = styled.aside`
  width: 33px;
  flex: none;
  margin-top: -1px;
  padding-left: 5px;
  display: flex;
  flex-direction: column;
  gap: 2px;
`;

const VBar = styled.div<{ $h: number }>`
  width: 24px;
  height: ${p => p.$h}px;
  display: flex;
  flex-direction: column;
  align-items: center;
  background: #ececec;
  border: 1px solid #555;
`;

const VGrip = styled.div`
  align-self: stretch;
  height: 8px;
  flex: none;
  background:
    repeating-linear-gradient(90deg, #bbb 0 1px, transparent 1px 2px) center / 14px 4px no-repeat,
    #3e3e3e;
`;

const VTool = styled.span`
  width: 22px;
  height: 22px;
  flex: none;
  display: flex;
  align-items: center;
  justify-content: center;
`;

const VSep = styled.span`
  width: 18px;
  height: 1px;
  margin: 3px 0;
  flex: none;
  background: #aaa;
`;

const Center = styled.div`
  flex: 1;
  display: flex;
  flex-direction: column;
  min-width: 0;
`;

const CanvasRow = styled.div`
  flex: 1;
  display: flex;
  min-height: 0;
`;

const Canvas = styled.section`
  position: relative;
  flex: 1;
  background: #212830;
  border-top: 1px solid #3a3a3a;
  overflow: hidden;
  font-family: ${CJK};
`;

const ViewLabel = styled.div`
  position: absolute;
  left: 5px;
  top: 3px;
  color: #d8d8d8;
  font-size: 12px;
  line-height: 18px;
`;

const Drawing = styled.svg`
  position: absolute;
  left: 0;
  top: 0;
`;

const CubeDrawing = styled(Drawing)`
  left: 1040px;
  top: 28px;
`;

const Floater = styled.div<{ $x: number; $y: number; $w: number }>`
  position: absolute;
  left: ${p => p.$x}px;
  top: ${p => p.$y}px;
  width: ${p => p.$w}px;
  height: 22px;
  display: flex;
  align-items: center;
  background: #eee;
  border-left: 8px solid #555;
  border-right: 8px solid #555;
`;

const FloatGrip = styled.span`
  position: absolute;
  left: -6px;
  top: 3px;
  width: 4px;
  height: 16px;
  background: repeating-linear-gradient(#222 0 1px, #999 1px 2px);
`;

const FloatClose = styled.span`
  position: absolute;
  right: -8px;
  top: -3px;
  width: 8px;
  text-align: center;
  color: #fff;
  font: bold 10px "Liberation Sans", sans-serif;
  line-height: 12px;
`;

const FloatCombo = styled.div`
  margin-left: 2px;
  flex: 1;
  height: 21px;
  display: flex;
  align-items: center;
  justify-content: flex-end;
  padding-right: 4px;
  background: linear-gradient(#fff, #eee);
`;

const WcsPill = styled.div`
  position: absolute;
  left: 1093px;
  top: 168px;
  width: 48px;
  height: 17px;
  display: flex;
  align-items: center;
  gap: 5px;
  padding-left: 4px;
  background: #72767e;
  border-radius: 4px;
  color: #3f4550;
  font: 11px "Liberation Sans", sans-serif;
`;

const VScroll = styled.div`
  width: 18px;
  flex: none;
  display: flex;
  flex-direction: column;
  align-items: center;
  background: #f0f0f0;
`;

const ScrollArrow = styled.span<{ $dir: 'up' | 'down' | 'left' | 'right' }>`
  width: 0;
  height: 0;
  flex: none;
  border: 4px solid transparent;
  ${p => (p.$dir === 'up' ? 'border-bottom: 4px solid #333; border-top: none;' : '')}
  ${p => (p.$dir === 'down' ? 'border-top: 4px solid #333; border-bottom: none;' : '')}
  ${p => (p.$dir === 'left' ? 'border-right: 4px solid #333; border-left: none;' : '')}
  ${p => (p.$dir === 'right' ? 'border-left: 4px solid #333; border-right: none;' : '')}
`;

const ScrollTop = styled.div`
  height: 16px;
  flex: none;
  display: flex;
  align-items: center;
`;

const ScrollThumb = styled.div`
  width: 15px;
  height: 16px;
  margin-top: 142px;
  border: 1px solid #aaa;
  border-radius: 2px;
  background: linear-gradient(90deg, #f8f8f8, #d4d4d4);
`;

const ScrollBottom = styled(ScrollTop)`
  margin-top: auto;
`;

const TabRow = styled.div`
  height: 16px;
  flex: none;
  display: flex;
  align-items: center;
  background: #f0f0f0;
`;

const TabNav = styled.span`
  width: 15px;
  height: 15px;
  flex: none;
  display: flex;
  align-items: center;
  justify-content: center;
  gap: 1px;
  border-right: 1px solid #999;
  border-left: 1px solid #ccc;
`;

const TabBar = styled.span`
  width: 1px;
  height: 8px;
  background: #333;
`;

const Tab = styled.span<{ $active?: boolean }>`
  position: relative;
  height: 16px;
  line-height: 16px;
  padding: ${p => (p.$active ? '0 8px 0 8px' : '0 8px 0 7px')};
  flex: none;
  font-size: 12px;
  color: ${p => (p.$active ? '#fff' : '#222')};
  background: ${p => (p.$active ? '#1c1c1c' : 'transparent')};
  clip-path: ${p => (p.$active ? 'polygon(0 0, 100% 0, 88% 100%, 12% 100%)' : 'none')};
  white-space: nowrap;
  &::after {
    content: '';
    display: ${p => (p.$active ? 'none' : 'block')};
    position: absolute;
    right: -2px;
    top: 0;
    height: 100%;
    border-right: 1px solid #333;
    transform: skewX(-25deg);
  }
`;

const HScroll = styled.div`
  margin-left: auto;
  width: 408px;
  height: 100%;
  display: flex;
  align-items: center;
  padding: 0 5px 0 9px;
  justify-content: space-between;
  border-left: 4px double #aaa;
`;

const TabCorner = styled.div`
  width: 18px;
  height: 100%;
  flex: none;
  background: #e8e8e8;
`;

/* ---------- bottom ---------- */
const DimRow = styled.div`
  display: flex;
  height: 37px;
  padding: 3px 0 0 30px;
`;

const CommandArea = styled.section`
  height: 57px;
  display: flex;
`;

const CommandSide = styled.div`
  width: 22px;
  flex: none;
  display: flex;
  flex-direction: column;
  align-items: center;
  background: #474747;
  color: #fff;
`;

const CommandGrip = styled.div`
  align-self: stretch;
  height: 13px;
  flex: none;
  background:
    repeating-linear-gradient(90deg, #ddd 0 1px, transparent 1px 2px) center / 16px 4px no-repeat,
    #7c7c7c;
`;

const CommandClose = styled.span`
  height: 20px;
  font: bold 13px/20px "Liberation Sans", sans-serif;
`;

const CommandBody = styled.div`
  flex: 1;
  display: flex;
  flex-direction: column;
  min-width: 0;
`;

const History = styled.div`
  height: 33px;
  flex: none;
  padding: 1px 0 0 3px;
  background: #c6c6c6;
  border-bottom: 1px solid #6a6a6a;
  font: 11.65px/15px "DejaVu Sans Mono", monospace;
  color: #1c1c1c;
  white-space: pre;
`;

const HistoryLine = styled.div`
  height: 15px;
`;

const Han = styled.span`
  font-family: "Noto Sans CJK SC", sans-serif;
  font-size: 13px;
`;

const InputLine = styled.div`
  flex: 1;
  display: flex;
  align-items: center;
  gap: 2px;
  padding-left: 5px;
  background: #fff;
  border-bottom: 1px solid #222;
`;

const Placeholder = styled.span`
  margin-left: 9px;
  color: #999;
  font-size: 12px;
  font-style: italic;
`;

const StatusBar = styled.footer`
  height: 22px;
  flex: none;
  display: flex;
  align-items: stretch;
  background: linear-gradient(#5a5a5a, #8a8a8a);
  border-top: 1px solid #333;
`;

const Coords = styled.div`
  width: 218px;
  padding-left: 11px;
  color: #8e8e8e;
  font: 10px/21px "Liberation Mono", monospace;
  white-space: pre;
`;

const StatusBtn = styled.span<{ $on?: boolean; $w?: number }>`
  width: ${p => p.$w ?? 22}px;
  flex: none;
  display: flex;
  align-items: center;
  justify-content: center;
  border-right: 1px solid #8a8a8a;
  background: ${p => (p.$on ? 'linear-gradient(#d8eef8, #8fcbe4)' : 'linear-gradient(#bcbcbc, #a2a2a2)')};
`;

const StatusRight = styled.div`
  margin-left: auto;
  display: flex;
  align-items: stretch;
`;

const StatusLabel = styled.span<{ $w: number }>`
  width: ${p => p.$w}px;
  flex: none;
  display: flex;
  align-items: center;
  justify-content: center;
  background: linear-gradient(#bcbcbc, #a2a2a2);
  border-right: 1px solid #8a8a8a;
  font-size: 13px;
  color: #222;
`;

const StatusGap = styled.span<{ $w: number; $dark?: boolean }>`
  width: ${p => p.$w}px;
  flex: none;
  background: ${p => (p.$dark ? '#5c5c5c' : '#9a9a9a')};
`;

const Watermark = styled.div`
  position: absolute;
  left: 974px;
  top: 844px;
  width: 235px;
  height: 115px;
  display: flex;
  align-items: center;
  gap: 16px;
  padding: 0 0 0 14px;
  background: #1f2e58;
  color: #c9ccd6;
`;

const BrandText = styled.div`
  display: flex;
  flex-direction: column;
`;

const BrandName = styled.div`
  font: 700 33px/38px "Noto Sans CJK SC", sans-serif;
  letter-spacing: 3px;
  white-space: nowrap;
`;

const BrandUrl = styled.div`
  margin-top: 1px;
  font: 400 14.5px/16px "Liberation Sans", sans-serif;
  letter-spacing: 1.7px;
  white-space: nowrap;
`;

/* ---------- data ---------- */
const MENUS = ['文件(F)', '编辑(E)', '视图(V)', '插入(I)', '格式(O)', '工具(T)', '绘图(D)', '标注(N)', '修改(M)', '参数(P)', '窗口(W)', '帮助(H)'];

const STD_TOOLS = ['new', 'open', 'save', '|', 'print', 'preview', 'publish', 'viz', '|', 'cut', 'copy', 'paste', 'match', 'block', '|', 'undo', 'dd', 'redo', 'dd', '|', 'pan', 'zrt', 'zwin', 'zprev', '|', 'props', 'dc', 'tp', 'sheet', 'markup', 'calc', '|', 'help'];
const LEFT_TOOLS = ['line', 'xline', 'pline', 'polygon', 'rect', 'arc', 'circle', 'cloud', 'spline', 'ellipse', 'ellarc', 'insert', 'bcreate', 'point', 'hatch', 'gradient', 'region', 'table', 'mtext', 'addsel'];
const RIGHT_TOOLS = ['eraser', 'cpobj', 'mirror', 'offset', 'array', 'move', 'rotate', 'scale', 'stretch', 'trim', 'extend', 'breakpt', 'brk', 'join', 'chamfer', 'fillet', 'blend', 'explode'];
const MODEL_TOOLS = ['psolid', 'box', 'wedge', 'cone', 'sphere', 'cyl', 'torus', 'pyr', 'helix', 'planar', '|', 'extrude', 'presspull', 'sweep', 'revolve', 'loft', '|', 'union', 'subtract', 'inter', '|', 'g3d', 'r3d', 'a3d', 'arr3d'];
const VIEW_TOOLS = ['nview', '|', 'vtop', 'vbot', 'vleft', 'vright', 'vfront', 'vback', '|', 'sw', 'se', 'ne', 'nw', '|', 'cam', '|', 'zcam'];
const STYLE_TOOLS = ['vs2d', '|', 'vswire', 'vshid', 'vsblue', 'vsor', '|', 'vsmgr'];
const DIM_TOOLS = ['dimlin', 'dimal', 'dimarc', 'dimord', '|', 'dimrad', 'dimjog', 'dimdia', 'dimang', '|', 'qdim', 'dimbase', 'dimcont', 'dimsp', 'dimbrk', '|', 'tol', 'cmark', 'insp', 'jogl', '|', 'dimed', 'dimted', 'dimup', '|'];
const STATUS_TOOLS: [string, boolean][] = [
  ['sInfer', false], ['sSnap', false], ['sGrid', false], ['sOrtho', false], ['sPolar', false], ['sOsnap', true], ['s3d', false],
  ['sOtrack', true], ['sDucs', true], ['sDyn', true], ['sLwt', false], ['sTp', true], ['sQp', false], ['sSc', false], ['sPlus', false],
];

const HISTORY_1 = '命令: _vscurrent';
const HISTORY_2 = '输入选项 [二维线框(2)/线框(W)/隐藏(H)/真实(R)/概念(C)/着色(S)/带边缘着色(E)/灰度(G)/勾画(SK)/X 射线(X)/其他(O)] <概念>: _W';

// the command window draws Han text larger than its fixed-width Latin
const splitHan = (text: string) =>
  text.split(/([\u4e00-\u9fff]+)/).map((part, i) => (i % 2 ? <Han key={i}>{part}</Han> : part));

const toPoints = (fn: (t: number) => [number, number], n = 56) =>
  Array.from({ length: n }, (_, i) => fn((i / n) * Math.PI * 2))
    .map(([x, y]) => `${x.toFixed(1)},${y.toFixed(1)}`)
    .join(' ');

const ellipse = (cx: number, cy: number, rx: number, ry: number) =>
  toPoints(t => [cx + rx * Math.cos(t), cy + ry * Math.sin(t)]);

// meridians of the wire sphere, drawn as sheared ellipses
const meridian = (sign: number) =>
  toPoints(t => [596.5 + sign * 137 * Math.cos(t), 514 + 177 * Math.sin(t + (26 * Math.PI) / 180)]);

const WireModel: React.FC = () => (
  <Drawing width="1199" height="750" viewBox="30 102 1199 750" fill="none">
    <g stroke="#f2f2f2" strokeWidth="1">
      <polygon points={ellipse(596.5, 515, 194, 112)} />
      <polygon points={ellipse(596.5, 402.5, 136.5, 79.5)} />
      <polygon points={ellipse(596.5, 626.5, 136.5, 79.5)} />
      <polygon points={meridian(1)} />
      <polygon points={meridian(-1)} />
    </g>
    <path d="M858 664L684 542" stroke="#e8101c" strokeWidth="4" strokeLinecap="round" />
    <path d="M706 544L682 540.5L693 562" stroke="#e8101c" strokeWidth="4" />
    <g strokeLinecap="round">
      <path d="M81 801L81 763" stroke="#1d56b8" strokeWidth="5" />
      <path d="M80 801L47 780" stroke="#3fc02a" strokeWidth="4" />
      <path d="M81 801L116 780" stroke="#d8332e" strokeWidth="4" />
    </g>
    <text x="80" y="758" fontFamily="Liberation Sans" fontSize="18" fill="#2a66c8">Z</text>
    <text x="45" y="776" fontFamily="Liberation Sans" fontSize="16" fill="#3f9a30">Y</text>
    <text x="114" y="776" fontFamily="Liberation Sans" fontSize="16" fill="#c8382e">X</text>
  </Drawing>
);

const ViewCube: React.FC = () => (
  <CubeDrawing width="160" height="125" viewBox="1070 130 160 125" fill="none">
    <ellipse cx="1147" cy="212" rx="63" ry="40.5" fill="#434a55" />
    <ellipse cx="1147" cy="210" rx="49" ry="30" fill="#1c2229" />
    <g fontFamily="Noto Sans CJK SC" fontSize="18" fill="#9aa0a8">
      <text transform="matrix(.95 -.45 .6 .55 1098.3 241.6)">西</text>
      <text transform="matrix(.95 .45 -.6 .55 1182.5 234.5)">南</text>
      <text transform="matrix(.95 .45 -.6 .55 1098.3 181.6)" fontSize="14">北</text>
      <text transform="matrix(.95 -.45 .6 .55 1183.3 187.9)" fontSize="14">东</text>
    </g>
    <path d="M1147 147L1182 163L1147 183L1113 163z" fill="#9e9e9e" stroke="#55585c" strokeWidth=".6" />
    <path d="M1113 163L1147 183V223L1113 204z" fill="#a0a0a0" stroke="#55585c" strokeWidth=".6" />
    <path d="M1182 163L1147 183V223L1179 204z" fill="#aaaaaa" stroke="#55585c" strokeWidth=".6" />
    <g fontFamily="Noto Sans CJK SC" fill="#5e6066" fontSize="20">
      <text transform="matrix(1 -.5 1 .5 1145 171.5)" fontSize="15">上</text>
      <text transform="matrix(1 .58 0 1 1119 196)">左</text>
      <text transform="matrix(1 -.58 0 1 1155 212)">前</text>
    </g>
  </CubeDrawing>
);

const AppLogo: React.FC = () => (
  <svg width="40" height="41" viewBox="0 0 40 41" style={{ position: 'absolute', left: -1, top: 0 }}>
    <path d="M4 38L19 4h9l3 27-8 7-1-8h-7l-5 5z" fill="#b8141a" />
    <path d="M19 4h9l1 18-8 4-6 1z" fill="#e23a30" />
    <path d="M21 17l-4 9h6z" fill="#c5c5c5" />
    <path d="M33 22l3 3 3-3z" fill="#333" />
  </svg>
);

const Logo: React.FC = () => (
  <svg width="48" height="52" viewBox="0 0 48 52" fill="none" stroke="#c9ccd6" strokeWidth="3.6" strokeLinejoin="round" strokeLinecap="round">
    <path d="M5 12v26a7 7 0 0 0 7 7" />
    <path d="M13 32V9c0-4 3-6 7-4l22 16c3 2 3 6 0 8L20 47c-3 2-7 2-9 0" />
    <path d="M19 20l9 6-9 6z" fill="#c9ccd6" strokeWidth="1" />
    <path d="M31 21v10" strokeWidth="2.4" />
  </svg>
);

const App: React.FC = () => (
  <>
    <GlobalStyle />
    <Page>
      <Header>
        <AppButton><AppLogo /></AppButton>
        <HeaderBody>
          <TitleRow>
            <QuickBar>
              <QuickIcon><Ico n="new" /></QuickIcon>
              <QuickIcon><Ico n="open" /></QuickIcon>
              <QuickIcon><Ico n="save" /></QuickIcon>
              <QuickIcon><Ico n="saveas" /></QuickIcon>
              <QuickIcon><Ico n="plotdoc" /></QuickIcon>
              <QuickIcon $w={12}><TinyArrow /></QuickIcon>
              <QuickIcon><Ico n="printw" /></QuickIcon>
              <QuickIcon><Ico n="undo" /></QuickIcon>
              <QuickIcon $w={10}><TinyArrow /></QuickIcon>
              <QuickIcon><Ico n="redo" /></QuickIcon>
              <QuickIcon $w={12}><TinyArrow /></QuickIcon>
              <WorkspaceBox>
                <Ico n="wsgear" size={16} />
                AutoCAD 经典
                <TinyArrow />
              </WorkspaceBox>
              <QuickIcon $w={14}><TinyArrow /></QuickIcon>
            </QuickBar>
            <TitleGlass>{'AutoCAD 2013     Drawing1.dwg'}</TitleGlass>
            <GlassEnd />
            <SearchBox>键入关键字或短语</SearchBox>
            <InfoBar>
              <QuickIcon><Binoculars size={16} color="#222" strokeWidth={1.8} /></QuickIcon>
              <QuickIcon><User size={18} color="#f4f4f4" strokeWidth={1.6} /></QuickIcon>
              <LoginText>登录</LoginText>
              <TinyArrow />
              <QuickIcon $w={30} $ml={4}>
                <svg width="16" height="16" viewBox="0 0 16 16"><path d="M1 2h4l3 4 3-4h4l-5 6 5 6h-4l-3-4-3 4H1l5-6z" fill="#2d5fc0" /></svg>
              </QuickIcon>
              <QuickIcon $w={18}>
                <svg width="16" height="18" viewBox="0 0 16 18" fill="none"><circle cx="6" cy="4" r="2.5" stroke="#eee" /><path d="M1 13c0-5 2-6 5-6" stroke="#eee" /><path d="M6 8h9v9H6z" fill="#ec8a22" stroke="#8a4a00" /><path d="M10.5 9.5v4M8.5 12l2 2 2-2" stroke="#fff" /></svg>
              </QuickIcon>
              <QuickIcon $w={6} $ml={2}><TinyArrow /></QuickIcon>
              <QuickIcon $w={42} $ml={7}><CircleHelp size={18} color="#1f55b0" fill="#fff" strokeWidth={2} /></QuickIcon>
              <TinyArrow />
            </InfoBar>
            <WindowArea>
              <WinButton $w={28}>
                <svg width="12" height="12" viewBox="0 0 12 12"><path d="M1 6h10v3H1z" fill="#fff" /></svg>
              </WinButton>
              <WinButton $w={25}>
                <svg width="12" height="12" viewBox="0 0 12 12" fill="none" stroke="#fff" strokeWidth="1.5"><path d="M3 1h8v7H3z" /><path d="M1 4h7v7H1z" fill="#5a86ad" /></svg>
              </WinButton>
              <WinButton $w={49} $close>X</WinButton>
            </WindowArea>
          </TitleRow>
          <MenuRow>
            {MENUS.map(m => <span key={m}>{m}</span>)}
            <MdiControls>
              <svg width="40" height="16" viewBox="0 0 40 16" fill="none" stroke="#e8e8e8" strokeWidth="1.4">
                <path d="M1 12h9" strokeWidth="2" />
                <path d="M18 3h7v7h-7z" />
                <path d="M15 6h7v7h-7z" fill="#666" />
                <path d="M30 4l8 8M38 4l-8 8" strokeWidth="2" />
              </svg>
            </MdiControls>
          </MenuRow>
        </HeaderBody>
      </Header>

      <ToolRow>
        <Toolbar $w={643}>
          <Grip />
          {renderTools(STD_TOOLS)}
        </Toolbar>
        <Toolbar $w={598} $gap={2}>
          <Grip />
          <Tool $w={25}><Ico n="tstyle" /></Tool>
          <Combo $w={118}><ComboText $pad={13}>Standard</ComboText><ComboArrow /></Combo>
          <ToolSep />
          <Tool $w={25}><Ico n="dstyle" /></Tool>
          <Combo $w={118}><ComboText $pad={13}>ISO-25</ComboText><ComboArrow /></Combo>
          <ToolSep />
          <Tool $w={25}><Ico n="tbstyle" /></Tool>
          <Combo $w={118}><ComboText>Standard</ComboText><ComboArrow /></Combo>
          <ToolSep />
          <Tool $w={25}><Ico n="mlstyle" /></Tool>
          <Combo $w={118}><ComboText $pad={13}>Standard</ComboText><ComboArrow /></Combo>
        </Toolbar>
      </ToolRow>

      <ToolRow>
        <Toolbar $w={226}>
          <Grip />
          <Combo $w={174}><ComboText $pad={1}>AutoCAD 经典</ComboText><ComboArrow /></Combo>
          <Tool $w={23}><Ico n="wsgear" /></Tool>
          <Tool $w={23}><Ico n="wssave" /></Tool>
        </Toolbar>
        <Toolbar $w={401} $gap={2}>
          <Grip />
          <Tool $w={24}><Ico n="laymgr" /></Tool>
          <Combo $w={298} $tight>
            <Ico n="bulb" size={16} />
            <Ico n="sun" size={16} />
            <Ico n="freeze" size={16} />
            <Ico n="unlock" size={16} />
            <Swatch $ml={4} />
            <ComboText $pad={4}>0</ComboText>
            <ComboArrow />
          </Combo>
          <Tool><Ico n="laycur" /></Tool>
          <Tool><Ico n="laymatch" /></Tool>
          <Tool><Ico n="layprev" /></Tool>
        </Toolbar>
        <Toolbar $w={574} $gap={9}>
          <Combo $w={147} $mono><Swatch /><ComboText>ByLayer</ComboText><ComboArrow /></Combo>
          <ToolSep />
          <Combo $w={158} $mono><DashLine $w={60} /><ComboText $pad={3}>ByLayer</ComboText><ComboArrow /></Combo>
          <ToolSep />
          <Combo $w={124} $mono><DashLine $w={35} /><ComboText $pad={1}>ByLayer</ComboText><ComboArrow /></Combo>
          <ToolSep />
          <Combo $w={118} $mono $dim><ComboText $pad={8}>BYCOLOR</ComboText><ComboArrow $light /></Combo>
        </Toolbar>
      </ToolRow>

      <Main>
        <DockLeft>
          <VBar $h={448}>
            <VGrip />
            {LEFT_TOOLS.map(n => <VTool key={n}><Ico n={n} /></VTool>)}
          </VBar>
        </DockLeft>
        <Center>
          <CanvasRow>
            <Canvas>
              <WireModel />
              <ViewCube />
              <ViewLabel>[−][西南等轴测][线框]</ViewLabel>
              <Floater $x={80} $y={30} $w={539}>
                <FloatGrip />
                {renderTools(MODEL_TOOLS)}
                <FloatClose>x</FloatClose>
              </Floater>
              <Floater $x={634} $y={30} $w={478}>
                <FloatGrip />
                {renderTools(VIEW_TOOLS)}
                <FloatCombo><ComboArrow $light /></FloatCombo>
                <FloatClose>x</FloatClose>
              </Floater>
              <Floater $x={517} $y={74} $w={165}>
                <FloatGrip />
                {renderTools(STYLE_TOOLS)}
                <FloatClose>x</FloatClose>
              </Floater>
              <WcsPill>WCS<ComboArrow $light /></WcsPill>
            </Canvas>
            <VScroll>
              <ScrollTop><ScrollArrow $dir="up" /></ScrollTop>
              <ScrollThumb />
              <ScrollBottom><ScrollArrow $dir="down" /></ScrollBottom>
            </VScroll>
          </CanvasRow>
          <TabRow>
            <TabNav><TabBar /><ScrollArrow $dir="left" /></TabNav>
            <TabNav><ScrollArrow $dir="left" /></TabNav>
            <TabNav><ScrollArrow $dir="right" /></TabNav>
            <TabNav><ScrollArrow $dir="right" /><TabBar /></TabNav>
            <Tab $active>模型</Tab>
            <Tab>布局1</Tab>
            <Tab>布局2</Tab>
            <HScroll>
              <ScrollArrow $dir="left" />
              <ScrollArrow $dir="right" />
            </HScroll>
            <TabCorner />
          </TabRow>
        </Center>
        <DockRight>
          <VBar $h={403}>
            <VGrip />
            {RIGHT_TOOLS.map(n => <VTool key={n}><Ico n={n} /></VTool>)}
          </VBar>
          <VBar $h={149}>
            <VGrip />
            <VTool><Ico n="ord1" /></VTool>
            <VTool><Ico n="ord2" /></VTool>
            <VTool><Ico n="ord3" /></VTool>
            <VTool><Ico n="ord4" /></VTool>
            <VSep />
            <VTool><Ico n="abc" /></VTool>
            <VTool><Ico n="wipe" /></VTool>
          </VBar>
        </DockRight>
      </Main>

      <DimRow>
        <Toolbar $w={640}>
          <Grip />
          {renderTools(DIM_TOOLS)}
          <Combo $w={120}><ComboText $pad={14}>ISO-25</ComboText><ComboArrow /></Combo>
          <Tool><Ico n="dstyle" /></Tool>
        </Toolbar>
      </DimRow>

      <CommandArea>
        <CommandSide>
          <CommandGrip />
          <CommandClose>X</CommandClose>
          <Wrench size={16} color="#fff" fill="#fff" />
        </CommandSide>
        <CommandBody>
          <History>
            <HistoryLine>{splitHan(HISTORY_1)}</HistoryLine>
            <HistoryLine>{splitHan(HISTORY_2)}</HistoryLine>
          </History>
          <InputLine>
            <Ico n="prompt" size={16} />
            <TinyArrow $light />
            <Placeholder>键入命令</Placeholder>
          </InputLine>
        </CommandBody>
      </CommandArea>

      <StatusBar>
        <Coords>2159.0654, -209.4389, 0.0000</Coords>
        {STATUS_TOOLS.map(([n, on]) => <StatusBtn key={n} $on={on}><Ico n={n} size={17} /></StatusBtn>)}
        <StatusRight>
          <StatusLabel $w={31}>模型</StatusLabel>
          <StatusBtn><Ico n="sLay" size={17} /></StatusBtn>
          <StatusBtn><Ico n="sVp" size={17} /></StatusBtn>
          <StatusGap $w={21} />
          <StatusBtn $w={20}><Ico n="sAnno" size={17} /></StatusBtn>
          <StatusLabel $w={36}>1:1 ▾</StatusLabel>
          <StatusBtn $w={20}><Ico n="sAnno2" size={17} /></StatusBtn>
          <StatusBtn $w={20}><Ico n="sAnno3" size={17} /></StatusBtn>
          <StatusGap $w={6} $dark />
          <StatusBtn><Ico n="sWs" size={17} /></StatusBtn>
          <StatusBtn><Ico n="sLock" size={17} /></StatusBtn>
          <StatusBtn><Ico n="sHw" size={17} /></StatusBtn>
          <StatusBtn $w={26}><Ico n="sBulb" size={17} /></StatusBtn>
          <StatusBtn $w={14}><TinyArrow /></StatusBtn>
          <StatusBtn $w={24}><Ico n="sClean" size={17} /></StatusBtn>
        </StatusRight>
      </StatusBar>

      <Watermark>
        <Logo />
        <BrandText>
          <BrandName>溜溜自学</BrandName>
          <BrandUrl>ZiXUE.3D66.COM</BrandUrl>
        </BrandText>
      </Watermark>
    </Page>
  </>
);

export default App;
